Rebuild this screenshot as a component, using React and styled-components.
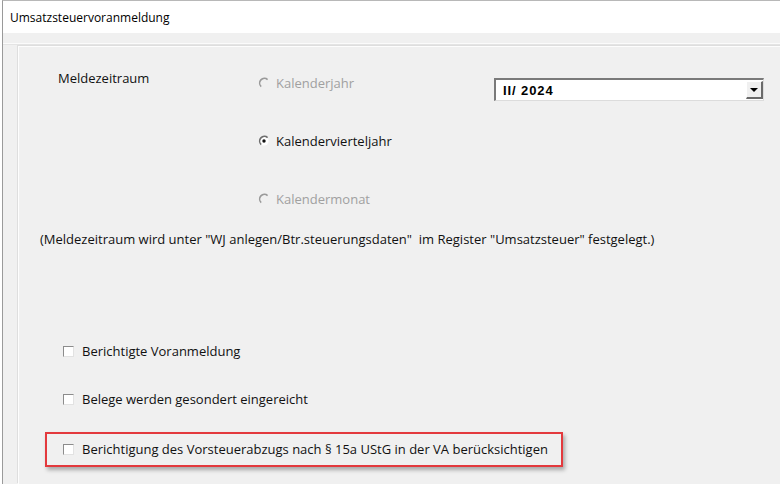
import React from 'react';
import styled, { createGlobalStyle } from 'styled-components';

const GlobalStyle = createGlobalStyle`
  html, body {
    margin: 0;
    padding: 0;
    background: #ffffff;
  }
  body {
    font-family: "Open Sans", "Noto Sans", "DejaVu Sans", sans-serif;
    font-size: 13px;
    color: #1a1a1a;
  }
`;

const PERIODS = [
  { label: 'Kalenderjahr', checked: false, disabled: true },
  { label: 'Kalendervierteljahr', checked: true, disabled: false },
  { label: 'Kalendermonat', checked: false, disabled: true }
];

const OPTIONS = [
  { label: 'Berichtigte Voranmeldung' },
  { label: 'Belege werden gesondert eingereicht' },
  { label: 'Berichtigung des Vorsteuerabzugs nach § 15a UStG in der VA berücksichtigen', highlight: true }
];

const RadioMark = ({ checked, disabled }) => (
  <svg width="12" height="12" viewBox="0 0 12 12">
    {!disabled && <circle cx="6" cy="6" r="4.6" fill="#ffffff" />}
    <path
      d="M3.2 9.6 A4.6 4.6 0 0 1 9.6 2.6"
      fill="none"
      stroke={disabled ? '#9a9a9a' : '#6e6e6e'}
      strokeWidth="1.6"
    />
    {checked && <circle cx="6" cy="6" r="1.7" fill="#111111" />}
  </svg>
);

const App = () => {
  return (
    <>
      <GlobalStyle />
      <Window>
        <TitleBar>Umsatzsteuervoranmeldung</TitleBar>
        <Body>
          <Rule />
          <Panel>
            <PeriodSection>
              <SectionLabel>Meldezeitraum</SectionLabel>
              <RadioGroup>
                {PERIODS.map(p => (
                  <RadioRow key={p.label} $disabled={p.disabled}>
                    <RadioMark checked={p.checked} disabled={p.disabled} />
                    {p.label}
                  </RadioRow>
                ))}
              </RadioGroup>
              <Combo>
                <ComboValue>II/ 2024</ComboValue>
                <ComboButton>
                  <Arrow />
                </ComboButton>
              </Combo>
            </PeriodSection>

            <Note>
              (Meldezeitraum wird unter "WJ anlegen/Btr.steuerungsdaten"&nbsp;&nbsp;im Register "Umsatzsteuer" festgelegt.)
            </Note>

            <CheckList>
              {OPTIONS.map(o => (
                <CheckRow key={o.label} $highlight={o.highlight}>
                  <CheckBox />
                  {o.label}
                </CheckRow>
              ))}
            </CheckList>
          </Panel>
        </Body>
      </Window>
    </>
  );
};

const Window = styled.div`
  width: 778px;
  height: 483px;
  margin-left: 2px;
  border-top: 1px solid #b8b8b8;
  border-left: 1px solid #9a9a9a;
  display: flex;
  flex-direction: column;
  overflow: hidden;
`;

const TitleBar = styled.div`
  height: 32px;
  background: #ffffff;
  display: flex;
  align-items: center;
  padding-left: 7px;
  font-size: 12px;
  color: #000000;
`;

const Body = styled.div`
  flex: 1;
  background: #f0f0f0;
  padding-top: 10px;
  display: flex;
  flex-direction: column;
`;

const Rule = styled.div`
  height: 1px;
  background: #fbfbfb;
  border-bottom: 1px solid #e4e4e4;
`;

const Panel = styled.div`
  flex: 1;
  margin: 1px 0 0 15px;
  border-top: 1px solid #fdfdfd;
  border-left: 1px solid #fdfdfd;
  box-shadow: -1px -1px 0 #dedede;
  padding: 26px 0 0 0;
  display: flex;
  flex-direction: column;
`;

const PeriodSection = styled.div`
  display: flex;
  align-items: flex-start;
`;

const SectionLabel = styled.div`
  width: 239px;
  padding-left: 39px;
  box-sizing: border-box;
  line-height: 20px;
  margin-top: -5px;
  color: #111111;
`;

const RadioGroup = styled.div`
  width: 236px;
  display: flex;
  flex-direction: column;
  gap: 38px;
`;

const RadioRow = styled.div`
  height: 20px;
  display: flex;
  align-items: center;
  gap: 6px;
  color: ${props => (props.$disabled ? '#a0a0a0' : '#111111')};
`;

const Combo = styled.div`
  width: 270px;
  height: 23px;
  margin-top: 5px;
  box-sizing: border-box;
  background: #ffffff;
  border-style: solid;
  border-width: 2px 1px 1px 2px;
  border-color: #7a7a7a #dcdcdc #dcdcdc #7a7a7a;
  display: flex;
  align-items: center;
  justify-content: space-between;
`;

const ComboValue = styled.span`
  font-family: "Liberation Sans", Arial, sans-serif;
  font-weight: bold;
  font-size: 13px;
  color: #000000;
  padding-left: 7px;
  letter-spacing: 0.9px;
`;

const ComboButton = styled.div`
  width: 17px;
  height: 18px;
  box-sizing: border-box;
  background: #f0f0f0;
  border-style: solid;
  border-width: 1px 2px 2px 1px;
  border-color: #ffffff #6a6a6a #6a6a6a #ffffff;
  display: flex;
  align-items: center;
  justify-content: center;
`;

const Arrow = styled.span`
  width: 0;
  height: 0;
  border-left: 4px solid transparent;
  border-right: 4px solid transparent;
  border-top: 4px solid #000000;
`;

const Note = styled.div`
  margin: 20px 0 0 21px;
  line-height: 20px;
  color: #111111;
  white-space: nowrap;
`;

const CheckList = styled.div`
  margin: 92px 0 0 26px;
  display: flex;
  flex-direction: column;
  align-items: flex-start;
  gap: 28px;
`;

const CheckRow = styled.div`
  height: 20px;
  display: flex;
  align-items: center;
  gap: 8px;
  color: #111111;
  padding: ${props => (props.$highlight ? '5px 13px 6px 16px' : '0 0 0 18px')};
  margin-top: ${props => (props.$highlight ? '-5px' : '0')};
  border: ${props => (props.$highlight ? '2px solid #e3393d' : 'none')};
  box-shadow: ${props => (props.$highlight ? '2px 3px 4px rgba(0, 0, 0, 0.3)' : 'none')};
`;

const CheckBox = styled.span`
  width: 11px;
  height: 11px;
  box-sizing: border-box;
  background: #ffffff;
  border-style: solid;
  border-width: 1px;
  border-color: #8c8c8c #e2e2e2 #e2e2e2 #8c8c8c;
`;

export default App;
